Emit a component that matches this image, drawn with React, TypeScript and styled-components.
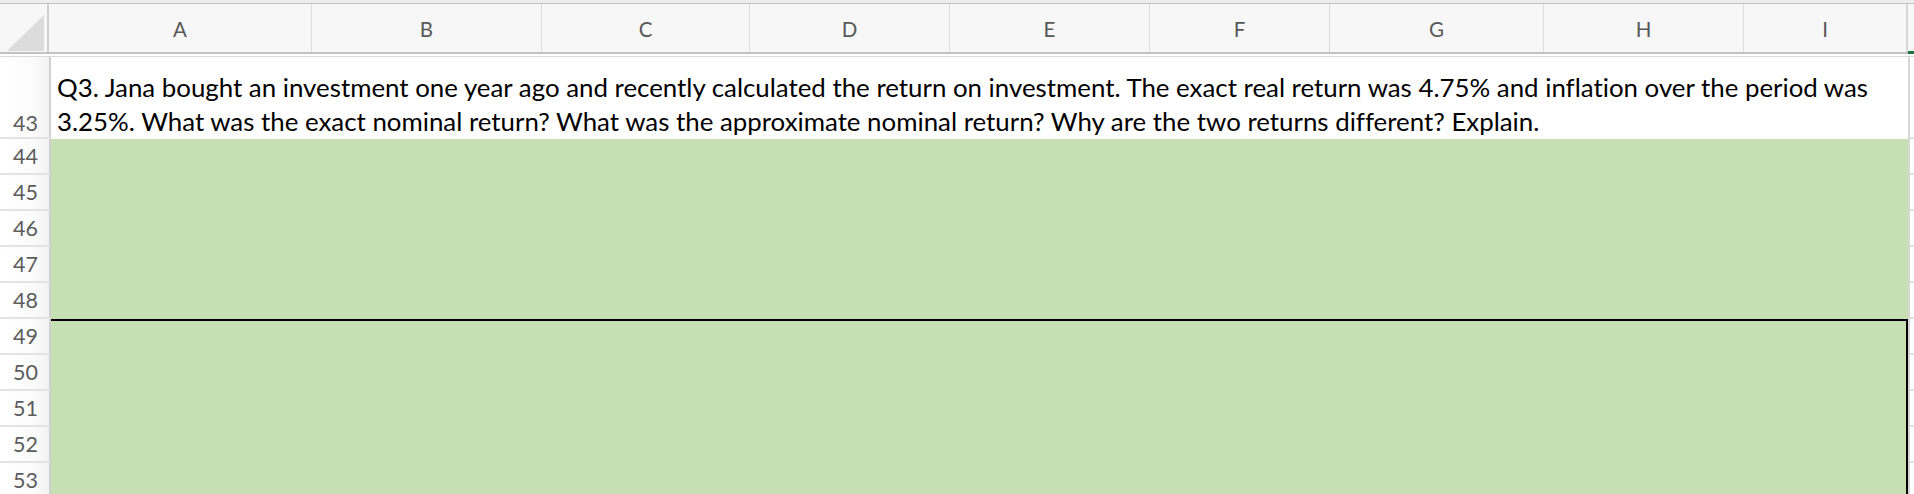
import styled, { createGlobalStyle } from 'styled-components';

const GlobalStyle = createGlobalStyle`
  html, body {
    margin: 0;
    padding: 0;
    background: #ffffff;
    overflow: hidden;
  }
`;

const columns = [
  { name: 'A', width: 263 },
  { name: 'B', width: 230 },
  { name: 'C', width: 208 },
  { name: 'D', width: 200 },
  { name: 'E', width: 200 },
  { name: 'F', width: 180 },
  { name: 'G', width: 214 },
  { name: 'H', width: 200 },
  { name: 'I', width: 163 },
];

const rows = [44, 45, 46, 47, 48, 49, 50, 51, 52, 53];

const Sheet = styled.div`
  width: 1914px;
  height: 494px;
  overflow: hidden;
  font-family: Lato, 'Open Sans', sans-serif;
  font-variant-ligatures: none;
  background: #ffffff;
`;

const TopEdge = styled.div`
  height: 3px;
  background: #ededed;
  border-bottom: 1px solid #c4c4c4;
`;

const HeaderRow = styled.div`
  display: flex;
  height: 48px;
  background: #f7f7f7;
  border-bottom: 2px solid #c2c2c2;
  position: relative;
`;

const Corner = styled.div`
  width: 49px;
  flex: none;
  border-right: 2px solid #cfcfcf;
  display: flex;
  align-items: flex-end;
  justify-content: flex-end;
  padding: 0 3px 1px 0;
  box-sizing: border-box;
`;

const ColumnHeader = styled.div<{ $width: number }>`
  width: ${({ $width }) => $width}px;
  flex: none;
  box-sizing: border-box;
  border-right: 1px solid #dcdcdc;
  display: flex;
  align-items: center;
  justify-content: center;
  color: #585858;
  font-size: 20.5px;
  padding-top: 2px;
`;

const ColumnHeaderRest = styled.div`
  flex: 1;
  border-left: 1px solid #d4d4d4;
`;

const SelectedMark = styled.div`
  position: absolute;
  right: 0;
  bottom: -2px;
  width: 6px;
  height: 3px;
  background: #1e7145;
`;

const HeaderGap = styled.div`
  height: 2px;
  background: #ffffff;
  border-bottom: 1px solid #dadada;
`;

const Body = styled.div`
  display: grid;
  grid-template-columns: 51px 1857px 1fr;
  grid-template-rows: 82px repeat(10, 36px);
`;

const RowLabel = styled.div<{ $row: number; $bottom?: boolean }>`
  grid-column: 1;
  grid-row: ${({ $row }) => $row};
  box-sizing: border-box;
  background: linear-gradient(to right, #ffffff 0%, #fbfbfb 70%, #f2f2f2 100%);
  border-right: 2px solid #d0d0d0;
  border-bottom: 2px solid #e4e4e4;
  color: #5c5c5c;
  font-size: 21.5px;
  display: flex;
  justify-content: center;
  align-items: ${({ $bottom }) => ($bottom ? 'flex-end' : 'center')};
  padding: ${({ $bottom }) => ($bottom ? '0 0 1px 2px' : '0 0 0 2px')};
`;

const QuestionCell = styled.div`
  grid-column: 2;
  grid-row: 1;
  display: flex;
  flex-direction: column;
  justify-content: flex-end;
  padding: 0 0 1px 6px;
  color: #000000;
  font-size: 25.85px;
  line-height: 34px;
  white-space: nowrap;
`;

const AnswerBlock = styled.div<{ $from: number; $to: number; $selected?: boolean }>`
  grid-column: 2;
  grid-row: ${({ $from, $to }) => `${$from} / ${$to}`};
  background: #c6e0b4;
  box-sizing: border-box;
  border-top: ${({ $selected }) => ($selected ? '2px solid #000000' : 'none')};
  border-right: ${({ $selected }) => ($selected ? '2px solid #000000' : 'none')};
`;

const SpareCell = styled.div<{ $row: number }>`
  grid-column: 3;
  grid-row: ${({ $row }) => $row};
  box-sizing: border-box;
  border-left: 2px solid #d6d6d6;
  border-bottom: 2px solid #dcdcdc;
`;

const App = () => (
  <>
    <GlobalStyle />
    <Sheet>
      <TopEdge />
      <HeaderRow>
        <Corner>
          <svg width="37" height="36" viewBox="0 0 37 36">
            <polygon points="0,36 37,36 37,0" fill="#dcdcdc" />
          </svg>
        </Corner>
        {columns.map((col) => (
          <ColumnHeader key={col.name} $width={col.width}>
            {col.name}
          </ColumnHeader>
        ))}
        <ColumnHeaderRest />
        <SelectedMark />
      </HeaderRow>
      <HeaderGap />
      <Body>
        <RowLabel $row={1} $bottom>
          43
        </RowLabel>
        <QuestionCell>
          <span>
            Q3. Jana bought an investment one year ago and recently calculated the return on investment. The exact real return was 4.75% and inflation over the period was
          </span>
          <span>
            3.25%. What was the exact nominal return? What was the approximate nominal return? Why are the two returns different? Explain.
          </span>
        </QuestionCell>
        <SpareCell $row={1} />
        {rows.map((n, i) => (
          <RowLabel key={n} $row={i + 2}>
            {n}
          </RowLabel>
        ))}
        {rows.map((n, i) => (
          <SpareCell key={n} $row={i + 2} />
        ))}
        <AnswerBlock $from={2} $to={7} />
        <AnswerBlock $from={7} $to={12} $selected />
      </Body>
    </Sheet>
  </>
);

export default App;
